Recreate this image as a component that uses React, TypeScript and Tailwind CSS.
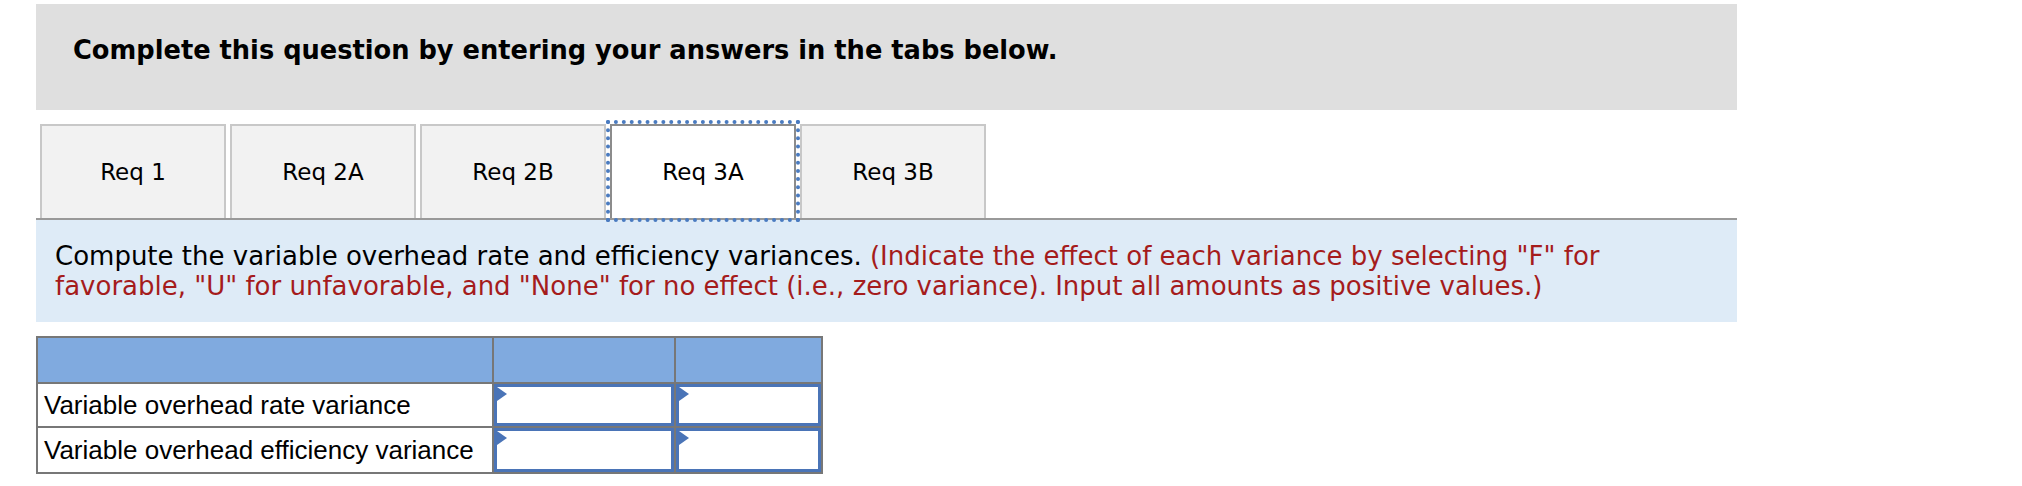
import React from "react";

const tabs = ["Req 1", "Req 2A", "Req 2B", "Req 3A", "Req 3B"];

function InputCell({ h }: { h: string }) {
  return (
    <td className="p-0 border-2 border-[#777] align-top">
      <div className={`relative w-full border-[3px] border-[#4a74b7] bg-white ${h}`}>
        <svg className="absolute left-0 top-0" width="11" height="15" viewBox="0 0 11 15">
          <polygon points="0,0 10,7 0,14" fill="#4a74b7" />
        </svg>
      </div>
    </td>
  );
}

export default function App() {
  return (
    <div className="w-[2022px] h-[486px] bg-white pt-[4px] pl-[36px]" style={{ fontFamily: '"DejaVu Sans", Verdana, sans-serif' }}>
      <div className="w-[1701px] h-[106px] bg-[#dfdfdf] pl-[37px] pt-[31px]">
        <div className="font-bold text-[25.7px] leading-[30px] text-black">Complete this question by entering your answers in the tabs below.</div>
      </div>
      <div className="w-[1701px] mt-[14px]">
        <div className="flex gap-[4px] pl-[4px]">
          {tabs.map((t, i) =>
            i === 3 ? (
              <div key={t} className="w-[186px] h-[94px] bg-white border-2 border-b-0 border-[#8c8c8c] outline-[4px] outline-dotted outline-[#4a7bc0] flex items-center justify-center text-[23px] text-black">
                {t}
              </div>
            ) : (
              <div key={t} className="w-[186px] h-[94px] bg-[#f2f2f2] border-2 border-b-0 border-[#c8c8c8] flex items-center justify-center text-[23px] text-black">
                {t}
              </div>
            )
          )}
        </div>
        <div className="h-[2px] bg-[#999]" />
        <div className="h-[102px] bg-[#deebf7] pl-[19px] pr-[60px] pt-[21px] text-[26px] leading-[30px]">
          <span className="text-black">Compute the variable overhead rate and efficiency variances.</span>{" "}
          <span className="text-[#a51c1c]">(Indicate the effect of each variance by selecting "F" for favorable, "U" for unfavorable, and "None" for no effect (i.e., zero variance). Input all amounts as positive values.)</span>
        </div>
      </div>
      <table className="mt-[14px] border-collapse border-2 border-[#777]" style={{ fontFamily: '"Liberation Sans", Arial, sans-serif' }}>
        <tbody>
          <tr className="h-[46px] bg-[#80aadf]">
            <td className="w-[456px] border-2 border-[#777]" />
            <td className="w-[182px] border-2 border-[#777]" />
            <td className="w-[147px] border-2 border-[#777]" />
          </tr>
          <tr className="h-[44px]">
            <td className="border-2 border-[#777] px-[6px] text-[26px] leading-[30px] text-black">Variable overhead rate variance</td>
            <InputCell h="h-[42px]" />
            <InputCell h="h-[42px]" />
          </tr>
          <tr className="h-[46px]">
            <td className="border-2 border-[#777] px-[6px] text-[26px] leading-[30px] text-black">Variable overhead efficiency variance</td>
            <InputCell h="h-[44px]" />
            <InputCell h="h-[44px]" />
          </tr>
        </tbody>
      </table>
    </div>
  );
}
